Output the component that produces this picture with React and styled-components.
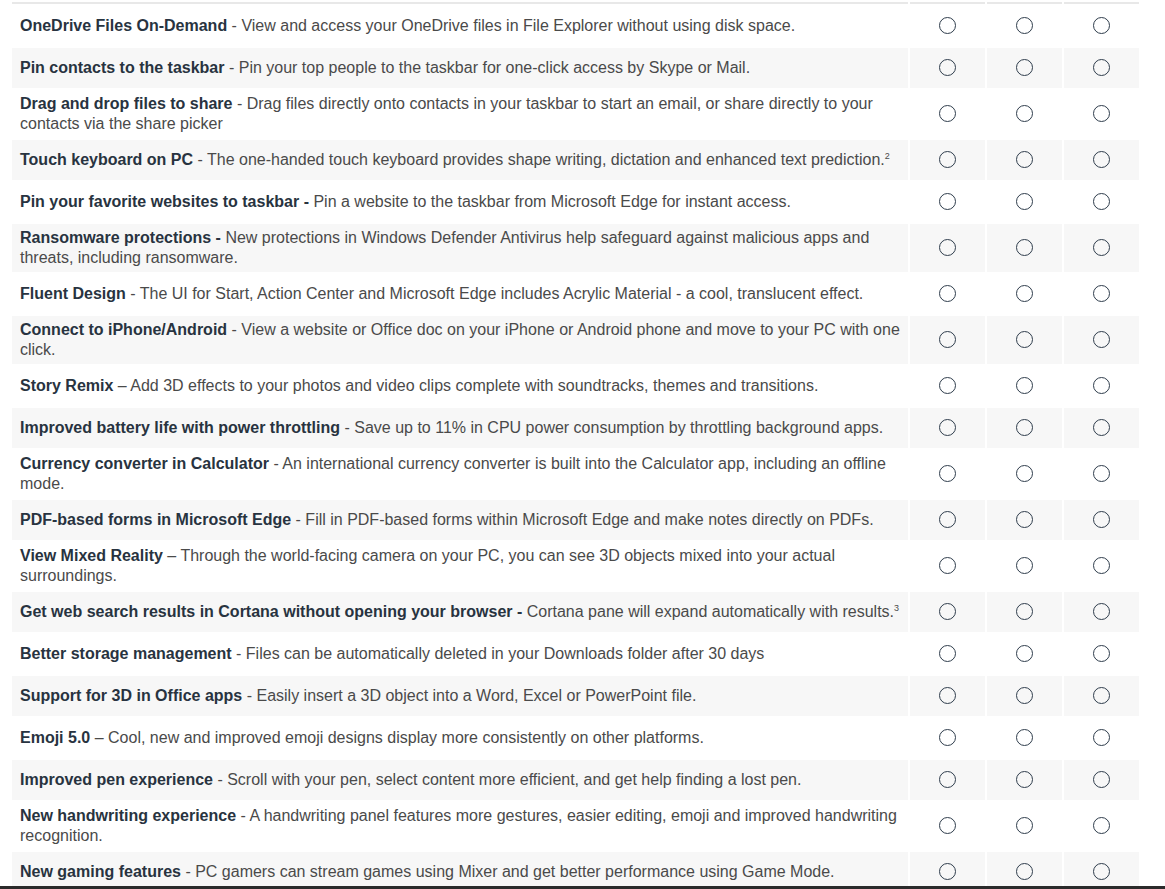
import React from 'react';
import styled, {createGlobalStyle} from 'styled-components';

const GlobalStyle = createGlobalStyle`
  body {
    margin: 0;
    background: #fff;
    font-family: "Liberation Sans", Arial, sans-serif;
    overflow: hidden;
  }
`;

const Table = styled.table`
  margin-left: 10px;
  border-collapse: separate;
  border-spacing: 2px;
  table-layout: fixed;
  width: 1131px;
`;

const HeadCell = styled.th`
  height: 2px;
  padding: 0;
  background: #e8e8e8;
  width: ${props => props.width}px;
`;

const Row = styled.tr`
  background: ${props => (props.striped ? '#f7f7f7' : '#fff')};
`;

const TextCell = styled.td`
  padding: 4px 8px;
  font-size: 16px;
  line-height: 20px;
  color: #4a4a4a;
  vertical-align: middle;

  b {
    color: #283340;
    font-weight: bold;
  }

  sup {
    font-size: 9px;
    line-height: 0;
  }
`;

const RadioCell = styled.td`
  height: 40px;
  padding: 0;
  vertical-align: middle;
`;

const Radio = styled.span`
  display: block;
  margin: -1px auto 0;
  width: 15px;
  height: 15px;
  border: 1.7px solid #2f3d4c;
  border-radius: 50%;
`;

const BottomEdge = styled.div`
  position: fixed;
  left: 0;
  right: 0;
  bottom: 0;
  height: 3px;
  background: #2b2b2b;
`;

const features = [
  ['OneDrive Files On-Demand', ' - View and access your OneDrive files in File Explorer without using disk space.'],
  ['Pin contacts to the taskbar', ' - Pin your top people to the taskbar for one-click access by Skype or Mail.'],
  ['Drag and drop files to share', ' - Drag files directly onto contacts in your taskbar to start an email, or share directly to your contacts via the share picker'],
  ['Touch keyboard on PC', ' - The one-handed touch keyboard provides shape writing, dictation and enhanced text prediction.', '2'],
  ['Pin your favorite websites to taskbar -', ' Pin a website to the taskbar from Microsoft Edge for instant access.'],
  ['Ransomware protections -', ' New protections in Windows Defender Antivirus help safeguard against malicious apps and threats, including ransomware.'],
  ['Fluent Design', ' - The UI for Start, Action Center and Microsoft Edge includes Acrylic Material - a cool, translucent effect.'],
  ['Connect to iPhone/Android', ' - View a website or Office doc on your iPhone or Android phone and move to your PC with one click.'],
  ['Story Remix', ' \u2013 Add 3D effects to your photos and video clips complete with soundtracks, themes and transitions.'],
  ['Improved battery life with power throttling', ' - Save up to 11% in CPU power consumption by throttling background apps.'],
  ['Currency converter in Calculator', ' - An international currency converter is built into the Calculator app, including an offline mode.'],
  ['PDF-based forms in Microsoft Edge', ' - Fill in PDF-based forms within Microsoft Edge and make notes directly on PDFs.'],
  ['View Mixed Reality', ' \u2013 Through the world-facing camera on your PC, you can see 3D objects mixed into your actual surroundings.'],
  ['Get web search results in Cortana without opening your browser -', ' Cortana pane will expand automatically with results.', '3'],
  ['Better storage management', ' - Files can be automatically deleted in your Downloads folder after 30 days'],
  ['Support for 3D in Office apps', ' - Easily insert a 3D object into a Word, Excel or PowerPoint file.'],
  ['Emoji 5.0', ' \u2013 Cool, new and improved emoji designs display more consistently on other platforms.'],
  ['Improved pen experience', ' - Scroll with your pen, select content more efficient, and get help finding a lost pen.'],
  ['New handwriting experience', ' - A handwriting panel features more gestures, easier editing, emoji and improved handwriting recognition.'],
  ['New gaming features', ' - PC gamers can stream games using Mixer and get better performance using Game Mode.'],
];

const App = () => {
  return (
    <React.Fragment>
      <GlobalStyle />
      <Table>
        <thead>
          <tr>
            <HeadCell width={896} />
            <HeadCell width={75} />
            <HeadCell width={75} />
            <HeadCell width={75} />
          </tr>
        </thead>
        <tbody>
          {features.map(([title, desc, note], i) => (
            <Row key={title} striped={i % 2 === 1}>
              <TextCell>
                <b>{title}</b>{desc}{note && <sup>{note}</sup>}
              </TextCell>
              <RadioCell><Radio /></RadioCell>
              <RadioCell><Radio /></RadioCell>
              <RadioCell><Radio /></RadioCell>
            </Row>
          ))}
        </tbody>
      </Table>
      <BottomEdge />
    </React.Fragment>
  );
}

export default App;
